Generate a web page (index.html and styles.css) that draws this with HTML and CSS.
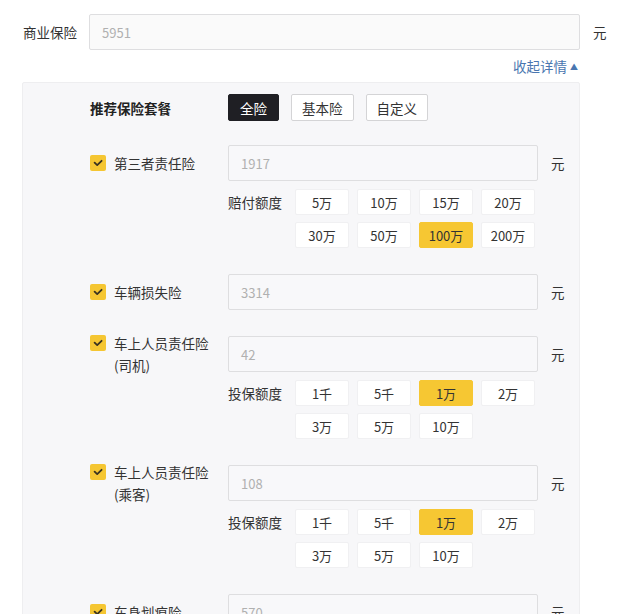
FILE: index.html
```html
<!DOCTYPE html>
<html lang="zh-CN">
<head>
<meta charset="utf-8">
<title>商业保险</title>
<link rel="stylesheet" href="styles.css">
</head>
<body>
<div class="page">
  <div class="top-row">
    <div class="top-label">商业保险</div>
    <div class="field field-top">5951</div>
    <div class="unit">元</div>
  </div>
  <div class="collapse-row"><span class="collapse">收起详情 <span class="tri">▲</span></span></div>
  <div class="panel">
    <div class="plan-row">
      <div class="plan-label">推荐保险套餐</div>
      <div class="plan-btns">
        <span class="plan-btn active">全险</span>
        <span class="plan-btn">基本险</span>
        <span class="plan-btn">自定义</span>
      </div>
    </div>

    <div class="item">
      <div class="item-head">
        <div class="label-col"><div class="label-inner"><span class="check"><svg viewBox="0 0 16 16" width="16" height="16"><path d="M4.6 7.6 L7.2 10.1 L11.6 5.8" fill="none" stroke="#3a3320" stroke-width="1.8" stroke-linecap="round" stroke-linejoin="round"/></svg></span><span class="label-text">第三者责任险</span></div></div>
        <div class="field">1917</div>
        <div class="unit">元</div>
      </div>
      <div class="opts">
        <div class="opts-label">赔付额度</div>
        <div class="opts-grid">
          <span class="opt">5万</span><span class="opt">10万</span><span class="opt">15万</span><span class="opt">20万</span>
          <span class="opt">30万</span><span class="opt">50万</span><span class="opt sel">100万</span><span class="opt">200万</span>
        </div>
      </div>
    </div>

    <div class="item">
      <div class="item-head">
        <div class="label-col"><div class="label-inner"><span class="check"><svg viewBox="0 0 16 16" width="16" height="16"><path d="M4.6 7.6 L7.2 10.1 L11.6 5.8" fill="none" stroke="#3a3320" stroke-width="1.8" stroke-linecap="round" stroke-linejoin="round"/></svg></span><span class="label-text">车辆损失险</span></div></div>
        <div class="field">3314</div>
        <div class="unit">元</div>
      </div>
    </div>

    <div class="item">
      <div class="item-head">
        <div class="label-col"><div class="label-inner"><span class="check"><svg viewBox="0 0 16 16" width="16" height="16"><path d="M4.6 7.6 L7.2 10.1 L11.6 5.8" fill="none" stroke="#3a3320" stroke-width="1.8" stroke-linecap="round" stroke-linejoin="round"/></svg></span><span class="label-text">车上人员责任险<br>(司机)</span></div></div>
        <div class="field">42</div>
        <div class="unit">元</div>
      </div>
      <div class="opts">
        <div class="opts-label">投保额度</div>
        <div class="opts-grid">
          <span class="opt">1千</span><span class="opt">5千</span><span class="opt sel">1万</span><span class="opt">2万</span>
          <span class="opt">3万</span><span class="opt">5万</span><span class="opt">10万</span>
        </div>
      </div>
    </div>

    <div class="item">
      <div class="item-head">
        <div class="label-col"><div class="label-inner"><span class="check"><svg viewBox="0 0 16 16" width="16" height="16"><path d="M4.6 7.6 L7.2 10.1 L11.6 5.8" fill="none" stroke="#3a3320" stroke-width="1.8" stroke-linecap="round" stroke-linejoin="round"/></svg></span><span class="label-text">车上人员责任险<br>(乘客)</span></div></div>
        <div class="field">108</div>
        <div class="unit">元</div>
      </div>
      <div class="opts">
        <div class="opts-label">投保额度</div>
        <div class="opts-grid">
          <span class="opt">1千</span><span class="opt">5千</span><span class="opt sel">1万</span><span class="opt">2万</span>
          <span class="opt">3万</span><span class="opt">5万</span><span class="opt">10万</span>
        </div>
      </div>
    </div>

    <div class="item">
      <div class="item-head">
        <div class="label-col"><div class="label-inner"><span class="check"><svg viewBox="0 0 16 16" width="16" height="16"><path d="M4.6 7.6 L7.2 10.1 L11.6 5.8" fill="none" stroke="#3a3320" stroke-width="1.8" stroke-linecap="round" stroke-linejoin="round"/></svg></span><span class="label-text">车身划痕险</span></div></div>
        <div class="field">570</div>
        <div class="unit">元</div>
      </div>
    </div>
  </div>
</div>
</body>
</html>
```

FILE: styles.css
```css
html, body {
  margin: 0;
  padding: 0;
  background: #ffffff;
}
body {
  font-family: "Noto Sans CJK SC", "Noto Sans", sans-serif;
  font-size: 13.5px;
  color: #333333;
  overflow: hidden;
}
.page {
  padding: 14px 0 0 22px;
  width: 600px;
}
.top-row {
  display: flex;
  align-items: center;
}
.top-label {
  width: 67px;
  padding-left: 1px;
  box-sizing: border-box;
  color: #333;
}
.field {
  box-sizing: border-box;
  height: 36px;
  border: 1px solid #dedee0;
  border-radius: 2px;
  background: #f8f8fa;
  color: #b0b0b0;
  font-size: 13px;
  display: flex;
  align-items: center;
  padding-left: 12px;
  width: 310px;
}
.field-top {
  width: 491px;
  background: #fafafa;
}
.unit {
  margin-left: 13px;
  font-size: 13.5px;
  color: #333;
}
.collapse-row {
  width: 556px;
  display: flex;
  justify-content: flex-end;
  height: 32px;
  align-items: center;
}
.collapse {
  color: #4a76b0;
  font-size: 13.5px;
}
.tri {
  font-size: 8px;
  vertical-align: 2px;
}
.panel {
  width: 558px;
  box-sizing: border-box;
  background: #f7f7f9;
  border: 1px solid #eeeef0;
  border-radius: 2px;
  padding: 11px 0 0 67px;
  min-height: 600px;
}
.plan-row {
  display: flex;
  align-items: center;
  margin-bottom: 24px;
}
.plan-label {
  width: 138px;
  font-weight: bold;
  color: #222;
}
.plan-btns {
  display: flex;
  gap: 12px;
}
.plan-btn {
  box-sizing: border-box;
  height: 27px;
  padding: 0 10px;
  border: 1px solid #d4d4d6;
  border-radius: 2px;
  background: #ffffff;
  display: flex;
  align-items: center;
  font-size: 13.5px;
  color: #333;
}
.plan-btn.active {
  background: #1f1f24;
  border-color: #1f1f24;
  color: #ffffff;
  padding: 0 11px;
}
.item {
  margin-bottom: 26px;
}
.item-head {
  display: flex;
  align-items: center;
  height: 36px;
}
.label-col {
  width: 138px;
  height: 36px;
  display: flex;
  align-items: center;
}
.label-inner {
  display: flex;
  align-items: flex-start;
  gap: 8px;
  line-height: 22px;
}
.check {
  width: 16px;
  height: 16px;
  margin-top: 3px;
  background: #f5c632;
  border-radius: 2px;
  flex: none;
  display: flex;
}
.label-text {
  color: #333;
}
.opts {
  margin-left: 138px;
  margin-top: 8px;
  display: flex;
  align-items: flex-start;
}
.opts-label {
  width: 67px;
  height: 26px;
  display: flex;
  align-items: center;
  color: #333;
}
.opts-grid {
  display: grid;
  grid-template-columns: repeat(4, 54px);
  column-gap: 8px;
  row-gap: 7px;
}
.opt {
  box-sizing: border-box;
  height: 26px;
  background: #ffffff;
  border: 1px solid #f0f0f2;
  border-radius: 2px;
  display: flex;
  align-items: center;
  justify-content: center;
  font-size: 13px;
  color: #333;
}
.opt.sel {
  background: #f6c733;
  border-color: #f6c733;
}
```
